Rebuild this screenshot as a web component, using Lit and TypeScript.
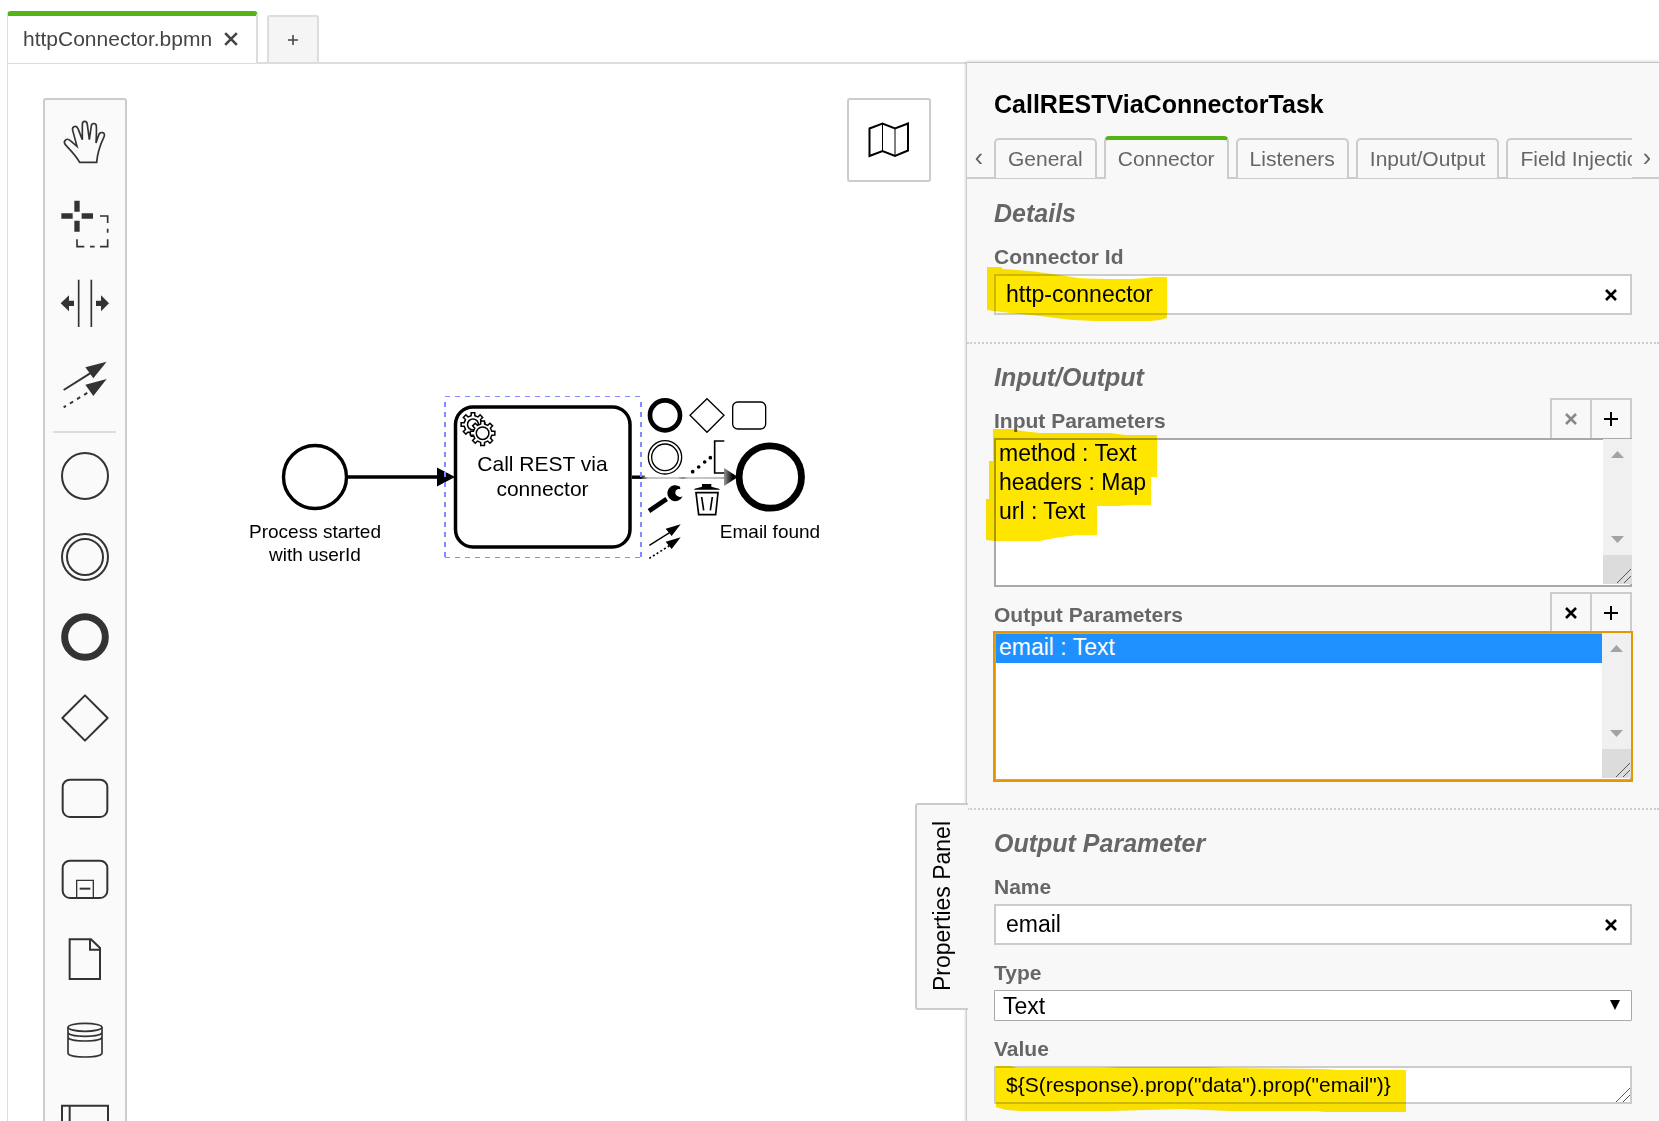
import { LitElement, html, svg, css, nothing, type TemplateResult } from "lit";
import { customElement, property, state } from "lit/decorators.js";
import { classMap } from "lit/directives/class-map.js";

const base = css`
  :host {
    font-family: "Liberation Sans", Arial, sans-serif;
    font-size: 21px;
  }
  * {
    box-sizing: border-box;
  }
  button {
    font: inherit;
    color: inherit;
    background: none;
    border: 0;
    padding: 0;
    display: flex;
    align-items: center;
    justify-content: center;
    cursor: pointer;
  }
  svg {
    display: block;
    flex: none;
    overflow: visible;
  }
`;

const cross = (size: number, width: number) => html`
  <svg width=${size} height=${size} viewBox="0 0 12 12" fill="none" stroke="currentColor" stroke-width=${width} aria-hidden="true">
    <path d="M1 1L11 11M11 1L1 11" />
  </svg>
`;

const plus = (size: number, width: number) => html`
  <svg width=${size} height=${size} viewBox="0 0 14 14" fill="none" stroke="currentColor" stroke-width=${width} aria-hidden="true">
    <path d="M7 0V14M0 7H14" />
  </svg>
`;

interface Tool {
  label: string;
  view: string;
  art: TemplateResult;
}

const ink = "#333";

const handTools: Tool[] = [
  {
    label: "Activate the hand tool",
    view: "183 354 144 144",
    art: svg`<path stroke-width="5" d="M239 487L290 487C292 462 299 438 311 413C315 405 314 399 308 398C301 396 297 401 295 408L288 429C289 412 290 394 289 378C288 368 275 368 274 378L268 419L262 374C261 361 247 361 247 374L247 419L234 386C230 374 215 379 218 391L231 439L211 422C200 412 188 423 196 434C210 449 226 464 239 487Z"/>`,
  },
  {
    label: "Activate the lasso tool",
    view: "183 595 144 144",
    art: svg`<path stroke-width="16" d="M231 600V633M231 660V693M184 646H218M245 646H279"/><path stroke-width="5" d="M300 646H323V667M323 684V696M323 716V738H300M284 738H270M253 738H231V716"/>`,
  },
  {
    label: "Activate the create/remove space tool",
    view: "93 27 144 144",
    art: svg`<path stroke-width="5" d="M146 29V171M184 29V171"/><path fill=${ink} stroke="none" d="M92 100L117 76V92H132V108H117V124ZM237 100L213 76V92H198V108H213V124Z"/>`,
  },
  {
    label: "Activate the global connect tool",
    view: "93 268 144 144",
    art: svg`<path stroke-width="6" d="M101 358L185 305"/><path stroke-width="6" stroke-dasharray="11 14" stroke-dashoffset="3" d="M101 410L176 364"/><path fill=${ink} stroke="none" d="M230 273L166 290L190 323ZM230 325L166 342L190 376Z"/>`,
  },
];

const shapeTools: Tool[] = [
  { label: "Create StartEvent", view: "0 0 144 144", art: svg`<circle cx="72" cy="72" r="69" stroke-width="6"/>` },
  {
    label: "Create Intermediate/Boundary Event",
    view: "0 0 144 144",
    art: svg`<circle cx="72" cy="72" r="69" stroke-width="6"/><circle cx="72" cy="72" r="54" stroke-width="6"/>`,
  },
  { label: "Create EndEvent", view: "0 0 144 144", art: svg`<circle cx="72" cy="72" r="61" stroke-width="21"/>` },
  {
    label: "Create Gateway",
    view: "0 0 144 144",
    art: svg`<path stroke-width="6" stroke-linejoin="round" d="M72 4L140 72L72 140L4 72Z"/>`,
  },
  { label: "Create Task", view: "0 0 144 144", art: svg`<rect x="5" y="17" width="134" height="112" rx="22" stroke-width="6"/>` },
  {
    label: "Create expanded SubProcess",
    view: "0 0 144 144",
    art: svg`<rect x="5" y="17" width="134" height="112" rx="22" stroke-width="6"/><path stroke-width="4" d="M47 128V76H97V128"/><path stroke-width="6" d="M56 101H88"/>`,
  },
  {
    label: "Create DataObjectReference",
    view: "93 732 144 144",
    art: svg`<path stroke-width="6" d="M119 745H183L210 771V864H119ZM180 745V776H210"/>`,
  },
  {
    label: "Create DataStoreReference",
    view: "93 973 144 144",
    art: svg`<g stroke-width="5"><ellipse cx="165" cy="1007" rx="51" ry="12"/><path d="M114 1007V1084C114 1100 216 1100 216 1084V1007M114 1022C114 1038 216 1038 216 1022M114 1036C114 1052 216 1052 216 1036"/></g>`,
  },
  {
    label: "Create Pool/Participant",
    view: "93 1215 144 144",
    art: svg`<path stroke-width="6" d="M96 1244H234V1330H96ZM119 1244V1330"/>`,
  },
];

const padTools: (Tool | null)[] = [
  { label: "Append EndEvent", view: "282 42 126 126", art: svg`<circle cx="345" cy="106" r="45" stroke-width="14"/>` },
  { label: "Append Gateway", view: "408 42 126 126", art: svg`<path stroke-width="4" d="M471 56L522 106L471 157L420 106Z"/>` },
  { label: "Append Task", view: "534 42 126 126", art: svg`<rect x="548" y="66" width="99" height="81" rx="15" stroke-width="4"/>` },
  {
    label: "Append Intermediate/Boundary Event",
    view: "282 168 126 126",
    art: svg`<circle cx="345" cy="232" r="50" stroke-width="4"/><circle cx="345" cy="232" r="40" stroke-width="4"/>`,
  },
  {
    label: "Append TextAnnotation",
    view: "408 168 126 126",
    art: svg`<path stroke-width="5" d="M523 183H494V279H523"/><path stroke-width="11" stroke-linecap="round" d="M428 275h.1M446 261h.1M464 246h.1M481 233h.1"/>`,
  },
  null,
  {
    label: "Change type",
    view: "282 294 126 126",
    art: svg`<path stroke-width="14" d="M297 393L350 357"/><path fill="#000" stroke="none" d="M390 320A24 24 0 1 0 398 349C394 351 390 351 387 350C378 348 374 341 377 333C379 328 385 327 391 327Z"/>`,
  },
  {
    label: "Remove",
    view: "408 294 126 126",
    art: svg`<path fill="#000" stroke="none" d="M432 329C434 323 452 323 456 320V312H484V320C488 323 507 323 510 329Z"/><path stroke-width="5" d="M438 338H504L497 404H446Z"/><path stroke-width="5" d="M455 351L461 391M487 351L481 391"/>`,
  },
  null,
  {
    label: "Connect using Sequence/MessageFlow",
    view: "282 420 126 126",
    art: svg`<path stroke-width="4" d="M298 496L360 457"/><path stroke-width="5" stroke-dasharray="6 7" d="M298 535L360 496"/><path fill="#000" stroke="none" d="M392 433L347 446L365 468ZM392 472L347 485L365 507Z"/>`,
  },
];

/** Outline of a cog with eight teeth. */
function cog(cx: number, cy: number, outer: number, inner: number): string {
  const points: string[] = [];
  const at = (radius: number, turn: number) => {
    const angle = turn * Math.PI * 2;
    points.push(`${(cx + radius * Math.cos(angle)).toFixed(2)} ${(cy + radius * Math.sin(angle)).toFixed(2)}`);
  };
  for (let tooth = 0; tooth < 8; tooth++) {
    const turn = tooth / 8;
    at(inner, turn - 0.033);
    at(outer, turn - 0.024);
    at(outer, turn + 0.024);
    at(inner, turn + 0.033);
  }
  return `M${points.join("L")}Z`;
}

@customElement("diagram-canvas")
export class DiagramCanvas extends LitElement {
  static styles = [
    base,
    css`
      :host {
        display: block;
        position: relative;
        overflow: hidden;
        background: #fff;
      }
      .drawing {
        width: 100%;
        height: 100%;
      }
      .task-label {
        font-size: 21px;
        text-anchor: middle;
      }
      .label {
        font-size: 19px;
        text-anchor: middle;
      }
      .palette {
        position: absolute;
        top: 34px;
        left: 35px;
        width: 84px;
        padding-top: 2px;
        background: #fafafa;
        border: 2px solid #ccc;
        border-radius: 3px;
      }
      .group {
        display: grid;
        grid-auto-rows: 80px 81px;
      }
      .rule {
        height: 2px;
        margin: 7px 9px 3px 8px;
        border: 0;
        background: #ddd;
      }
      .pad {
        position: absolute;
        top: 330px;
        left: 636px;
        display: grid;
        grid-template-columns: repeat(3, 42px);
        grid-auto-rows: 42px;
      }
      .minimap {
        position: absolute;
        top: 34px;
        right: 35px;
        width: 84px;
        height: 84px;
        background: #fff;
        border: 2px solid #ccc;
        border-radius: 3px;
      }
    `,
  ];

  private tool(tool: Tool, size: number, color: string) {
    return html`<button type="button" aria-label=${tool.label}>
      <svg width=${size} height=${size} viewBox=${tool.view} fill="none" stroke=${color} aria-hidden="true">${tool.art}</svg>
    </button>`;
  }

  render() {
    return html`
      <svg class="drawing" role="img" aria-label="Process diagram">
        <defs>
          <linearGradient id="fade" gradientUnits="userSpaceOnUse" x1="632" y1="0" x2="738" y2="0">
            <stop offset="0.08" stop-color="#000" />
            <stop offset="0.15" stop-color="#c4c4c4" />
            <stop offset="0.43" stop-color="#ccc" />
            <stop offset="0.48" stop-color="#888" />
            <stop offset="0.53" stop-color="#ccc" />
            <stop offset="0.85" stop-color="#bbb" />
            <stop offset="0.95" stop-color="#000" />
          </linearGradient>
        </defs>
        <g transform="translate(-8 -64)">
          <circle cx="315" cy="477" r="31.5" fill="#fff" stroke="#000" stroke-width="3.4" />
          <text class="label" x="315" y="538">Process started</text>
          <text class="label" x="315" y="561">with userId</text>
          <path d="M348 477H440" stroke="#000" stroke-width="3.4" />
          <path d="M437 467.500L455 477L437 486.500Z" />
          <rect x="455.500" y="407" width="174.500" height="140" rx="17.500" fill="#fff" stroke="#000" stroke-width="3.500" />
          <g fill="#fff" stroke="#000" stroke-width="1.500">
            <path d=${cog(473, 424.5, 12, 9)} />
            <circle cx="473" cy="424.500" r="5.500" />
            <path d=${cog(482.6, 433.2, 12.4, 9.4)} />
            <circle cx="482.600" cy="433.200" r="6.300" />
          </g>
          <text class="task-label" x="542.500" y="471">Call REST via</text>
          <text class="task-label" x="542.500" y="496">connector</text>
          <rect x="632" y="475.500" width="13" height="3.400" fill="url(#fade)" />
          <rect x="645" y="477" width="82" height="2" fill="url(#fade)" />
          <path d="M724 468L738 477L724 486Z" fill="url(#fade)" />
          <circle cx="770.300" cy="477" r="31.200" fill="#fff" stroke="#000" stroke-width="6.800" />
          <text class="label" x="770" y="538">Email found</text>
          <g stroke="#88f" stroke-dasharray="5 5" fill="none">
            <path d="M445 396.500H641M445 557.500H641" />
            <path stroke-width="2" d="M445 402V557M641 402V557" />
          </g>
        </g>
      </svg>

      <div class="palette" role="toolbar" aria-label="Palette">
        <div class="group">${handTools.map((t) => this.tool(t, 48, ink))}</div>
        <hr class="rule" />
        <div class="group">${shapeTools.map((t) => this.tool(t, 48, ink))}</div>
      </div>

      <div class="pad" role="toolbar" aria-label="Context pad">
        ${padTools.map((t) => (t ? this.tool(t, 42, "#000") : html`<span></span>`))}
      </div>

      <button class="minimap" type="button" aria-label="Toggle minimap">
        <svg width="42" height="36" viewBox="0 0 42 36" fill="none" stroke="#000" aria-hidden="true">
          <path stroke-width="2" d="M1.500 6.500L14.500 1.500L27 6.500L40 1.500V28.500L27 34L14.500 29L1.500 34Z" />
          <path stroke-width="1" d="M14.500 2V29M27 7V34" />
        </svg>
      </button>
    `;
  }
}

@customElement("properties-panel")
export class PropertiesPanel extends LitElement {
  @property() element = "CallRESTViaConnectorTask";
  @state() private tab = "Connector";

  static styles = [
    base,
    css`
      :host {
        display: block;
        position: relative;
        background: #f8f8f8;
        border-top: 1px solid #c4c4c4;
        border-left: 1px solid #ccc;
        box-shadow: 0 0 3px rgba(0, 0, 0, 0.25);
      }
      .toggle {
        position: absolute;
        top: 740px;
        right: 100%;
        margin-right: -1px;
        width: 53px;
        height: 207px;
        font-size: 23px;
        background: #f8f8f8;
        border: 2px solid #ccc;
        border-right: 0;
        border-radius: 3px 0 0 3px;
      }
      .toggle-text {
        writing-mode: vertical-rl;
        transform: rotate(180deg);
      }
      .title {
        margin: 26px 27px 17px;
        font-size: 25px;
        line-height: 30px;
      }
      .strip {
        display: flex;
        height: 43px;
        color: #666;
        box-shadow: inset 0 -2px #ccc;
      }
      .scroll {
        width: 27px;
        padding-right: 3px;
        font-size: 25px;
      }
      .scroll.next {
        padding: 0 0 0 3px;
      }
      .tabs {
        flex: 1;
        min-width: 0;
        display: flex;
        gap: 7px;
        overflow: hidden;
      }
      .tab {
        flex: none;
        margin: 2px 0 1px;
        padding: 0 12px;
        background: #f8f8f8;
        border: 2px solid #ccc;
        border-bottom: 0;
        border-radius: 5px 5px 0 0;
      }
      .tab.active {
        margin: 0;
        padding-bottom: 1px;
        border-top: 4px solid #52b415;
      }
      .section {
        display: flex;
        flex-direction: column;
        padding: 19px 27px 27px;
      }
      .section + .section {
        padding-top: 18px;
        border-top: 2px dotted #ccc;
      }
      .heading {
        margin: 0 0 17px;
        color: #666;
        font-size: 25px;
        line-height: 30px;
        font-style: italic;
      }
      .field + .field {
        margin-top: 16px;
      }
      .head {
        display: flex;
        align-items: flex-end;
        justify-content: space-between;
        height: 29px;
      }
      .name {
        display: block;
        margin-bottom: 5px;
        color: #666;
        font-weight: bold;
        line-height: 24px;
      }
      .actions {
        display: flex;
      }
      .action {
        width: 42px;
        height: 40px;
        background: #f8f8f8;
        border: 2px solid #ccc;
        border-bottom: 0;
      }
      .action + .action {
        margin-left: -2px;
      }
      .action:disabled {
        color: #888;
      }
      .box {
        position: relative;
      }
      .entry {
        display: flex;
        height: 41px;
        background: #fff;
        border: 2px solid #ccc;
      }
      .text {
        flex: 1;
        min-width: 0;
        padding: 0 10px;
        border: 0;
        outline: 0;
        background: none;
        color: #000;
        font: inherit;
        font-size: 23px;
      }
      .clear {
        width: 38px;
      }
      .list {
        display: block;
        width: 100%;
        height: 149px;
        padding: 0;
        overflow: hidden;
        background: #fff;
        border: 2px solid #a9a9a9;
        border-radius: 0;
        color: #000;
        font: inherit;
        font-size: 23px;
      }
      .list option {
        height: 29px;
        padding: 0 3px 3px;
        line-height: 26px;
      }
      .list option:checked {
        color: #fff;
        background: linear-gradient(#1e90ff, #1e90ff);
      }
      .list.focused {
        outline: 2px solid #e59700;
        outline-offset: -1px;
      }
      .bar {
        position: absolute;
        top: 1px;
        right: 0;
        bottom: 3px;
        width: 29px;
        display: flex;
        flex-direction: column;
        background: #f0f0f0;
        pointer-events: none;
      }
      .focused + .bar {
        right: 1px;
      }
      .arrows {
        flex: 1;
        display: flex;
        flex-direction: column;
        justify-content: space-between;
        align-items: center;
        padding: 12px 0;
      }
      .corner {
        display: flex;
        align-items: flex-end;
        justify-content: flex-end;
        height: 29px;
        padding: 1px;
        background: #dcdcdc;
      }
      .mark {
        position: absolute;
        fill: #ffe600;
        mix-blend-mode: multiply;
        pointer-events: none;
      }
      .mark-id {
        top: -7px;
        left: -7px;
      }
      .mark-list {
        top: -9px;
        left: -8px;
      }
      .mark-value {
        top: 0;
        left: 2px;
      }
      .choice {
        display: block;
        width: 100%;
        height: 31px;
        padding: 0 8px;
        appearance: none;
        background: #fff;
        border: 1px solid #a9a9a9;
        border-radius: 1px;
        color: #000;
        font: inherit;
        font-size: 23px;
      }
      .caret {
        position: absolute;
        top: 10px;
        right: 12px;
        pointer-events: none;
      }
      .value {
        display: block;
        width: 100%;
        height: 38px;
        padding: 5px 10px;
        resize: none;
        overflow: hidden;
        background: #fff;
        border: 2px solid #ccc;
        color: #000;
        font: inherit;
        line-height: 24px;
      }
      .grip {
        position: absolute;
        right: 2px;
        bottom: 2px;
        pointer-events: none;
      }
    `,
  ];

  private grip(extra: string | typeof nothing = nothing) {
    return html`<svg class=${extra} width="14" height="14" viewBox="0 0 14 14" stroke="#555" aria-hidden="true">
      <path d="M0 14L14 0M7 14L14 7" />
    </svg>`;
  }

  private entry(id: string, label: string, value: string, mark: unknown = nothing) {
    return html`<div class="field">
      <label class="name" for=${id}>${label}</label>
      <div class="box">
        <div class="entry">
          <input class="text" id=${id} type="text" .value=${value} />
          <button class="clear" type="button" aria-label="Clear ${label}">${cross(12, 2.6)}</button>
        </div>
        ${mark}
      </div>
    </div>`;
  }

  private list(id: string, label: string, items: string[], selected: string | null, mark: unknown = nothing) {
    return html`<div class="field">
      <div class="head">
        <label class="name" for=${id}>${label}</label>
        <div class="actions">
          <button class="action" type="button" aria-label="Remove" ?disabled=${selected === null}>${cross(12, 2.6)}</button>
          <button class="action" type="button" aria-label="Add">${plus(14, 2)}</button>
        </div>
      </div>
      <div class="box">
        <select class=${classMap({ list: true, focused: selected !== null })} id=${id} size="5">
          ${items.map((item) => html`<option ?selected=${item === selected}>${item}</option>`)}
        </select>
        <div class="bar" aria-hidden="true">
          <div class="arrows">
            <svg width="13" height="7" viewBox="0 0 13 7" fill="#a3a3a3"><path d="M0 7L6.500 0L13 7Z" /></svg>
            <svg width="13" height="7" viewBox="0 0 13 7" fill="#a3a3a3"><path d="M0 0L6.500 7L13 0Z" /></svg>
          </div>
          <div class="corner">${this.grip()}</div>
        </div>
        ${mark}
      </div>
    </div>`;
  }

  render() {
    const tabs = ["General", "Connector", "Listeners", "Input/Output", "Field Injections"];
    return html`
      <button class="toggle" type="button"><span class="toggle-text">Properties Panel</span></button>
      <h1 class="title">${this.element}</h1>
      <div class="strip">
        <button class="scroll" type="button" aria-label="Previous tabs">‹</button>
        <div class="tabs" role="tablist">
          ${tabs.map(
            (name) => html`<button
              class=${classMap({ tab: true, active: name === this.tab })}
              type="button"
              role="tab"
              aria-selected=${name === this.tab ? "true" : "false"}
              @click=${() => (this.tab = name)}
            >${name}</button>`
          )}
        </div>
        <button class="scroll next" type="button" aria-label="Next tabs">›</button>
      </div>

      <section class="section">
        <h2 class="heading">Details</h2>
        ${this.entry(
          "connector-id",
          "Connector Id",
          "http-connector",
          html`<svg class="mark mark-id" width="180" height="54" viewBox="987 267 180 54" aria-hidden="true">
            <path d="M987 267H1001L1003 269L1030 271L1060 275L1078 278Q1095 279 1120 279Q1143 279 1153 277H1167V318L1160 320L1150 321H1095L1072 320L1040 316L1010 313L993 311L987 310Z" />
          </svg>`
        )}
      </section>

      <section class="section">
        <h2 class="heading">Input/Output</h2>
        ${this.list(
          "inputs",
          "Input Parameters",
          ["method : Text", "headers : Map", "url : Text"],
          null,
          html`<svg class="mark mark-list" width="171" height="112" viewBox="986 429 171 112" aria-hidden="true">
            <path d="M993 429H1012L1022 431L1040 433H1110L1125 435H1157V477H1151V505H1133L1118 506H1097V535H1077L1055 538L1040 541H996L986 540V499H989V461H993Z" />
          </svg>`
        )}
        ${this.list("outputs", "Output Parameters", ["email : Text"], "email : Text")}
      </section>

      <section class="section">
        <h2 class="heading">Output Parameter</h2>
        ${this.entry("param-name", "Name", "email")}
        <div class="field">
          <label class="name" for="param-type">Type</label>
          <div class="box">
            <select class="choice" id="param-type">
              <option selected>Text</option>
              <option>Script</option>
              <option>List</option>
              <option>Map</option>
            </select>
            <svg class="caret" width="10" height="10" viewBox="0 0 10 10" aria-hidden="true"><path d="M0 0H10L5 10Z" /></svg>
          </div>
        </div>
        <div class="field">
          <label class="name" for="param-value">Value</label>
          <div class="box">
            <textarea class="value" id="param-value" rows="1" spellcheck="false" .value=${'${S(response).prop("data").prop("email")}'}></textarea>
            ${this.grip("grip")}
            <svg class="mark mark-value" width="410" height="46" viewBox="996 1065 410 46" aria-hidden="true">
              <path d="M996 1065H1011L1017 1067H1100L1120 1066H1210L1225 1067L1323 1068L1340 1069H1406V1111H1325L1316 1110H1230L1180 1108L1110 1110H1020L1006 1109L996 1106Z" />
            </svg>
          </div>
        </div>
      </section>
    `;
  }
}

@customElement("app-root")
export class AppRoot extends LitElement {
  static styles = [
    base,
    css`
      :host {
        display: flex;
        flex-direction: column;
        height: 100vh;
        overflow: hidden;
        background: #fff;
        color: #000;
      }
      .files {
        display: flex;
        gap: 9px;
        height: 64px;
        margin-left: 7px;
        padding-top: 11px;
        color: #444;
        box-shadow: inset 0 -2px #ddd;
      }
      .file {
        display: flex;
        align-items: center;
        gap: 12px;
        margin-bottom: 1px;
        padding: 0 18px 1px 15px;
        background: #fff;
        border: 2px solid #ddd;
        border-width: 5px 2px 0 1px;
        border-top-color: #52b415;
        border-radius: 4px 4px 0 0;
      }
      .add {
        width: 52px;
        margin: 4px 0 0;
        background: #f5f5f5;
        border: 2px solid #ddd;
        border-radius: 3px 3px 0 0;
      }
      .work {
        flex: 1;
        min-height: 0;
        display: flex;
        margin-left: 7px;
        border-left: 1px solid #ddd;
      }
      .canvas {
        flex: 1;
        min-width: 0;
      }
      .panel {
        flex: none;
        width: 693px;
        margin-top: -2px;
      }
    `,
  ];

  render() {
    return html`
      <header class="files">
        <div class="file">
          <span>httpConnector.bpmn</span>
          <button type="button" aria-label="Close tab">${cross(14, 2.2)}</button>
        </div>
        <button class="add" type="button" aria-label="New tab">${plus(10, 2.2)}</button>
      </header>
      <main class="work">
        <diagram-canvas class="canvas"></diagram-canvas>
        <properties-panel class="panel"></properties-panel>
      </main>
    `;
  }
}
